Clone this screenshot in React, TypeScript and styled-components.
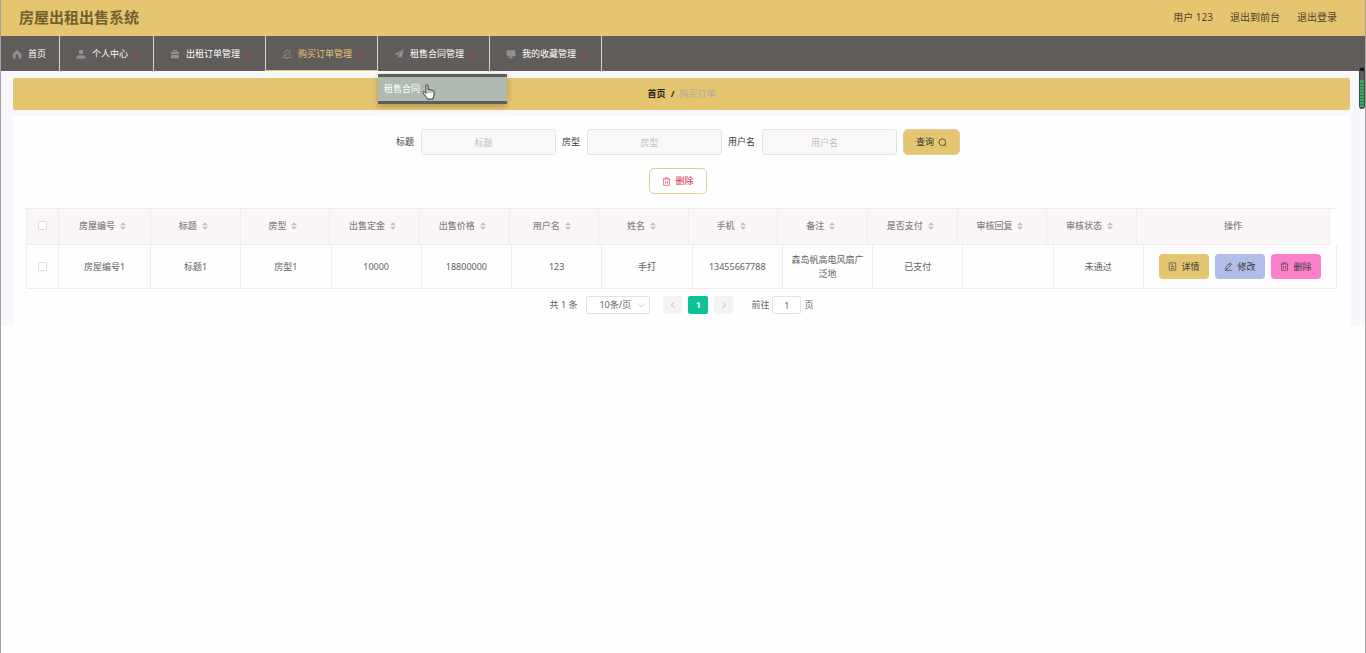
import React from "react";
import styled, { createGlobalStyle, css } from "styled-components";

const gold = "#e6c570";
const slate = "#5f5c5a";
const line = "#eeecf1";

const GlobalStyle = createGlobalStyle`
  * { box-sizing: border-box; }
  body {
    margin: 0;
    background: #fefefe;
    color: #606266;
    font-family: "Noto Sans", "Noto Sans CJK SC", sans-serif;
    font-size: 9px;
    line-height: 14px;
  }
  button, input, select { font: inherit; color: inherit; margin: 0; }
  a { color: inherit; text-decoration: none; }
`;

const Page = styled.div`
  position: relative;
  min-height: 100vh;
  border: solid #a3a3a6;
  border-width: 0 1px;
`;

const Header = styled.header`
  display: flex;
  align-items: center;
  justify-content: space-between;
  height: 36px;
  padding: 0 28px 3px 18px;
  background: ${gold};
`;

const Title = styled.h1`
  margin: 0;
  font-size: 15px;
  line-height: 20px;
  font-weight: 700;
  color: #74602c;
`;

const UserLinks = styled.div`
  display: flex;
  gap: 17px;
  font-size: 10px;
  color: #4f4425;
`;

const Nav = styled.nav`
  display: flex;
  height: 35px;
  background: ${slate};
`;

const NavItem = styled.div<{ $active?: boolean }>`
  position: relative;
  border-right: 1px solid #d6d5d6;
  color: ${(p) => (p.$active ? gold : "#fff")};
  box-shadow: ${(p) => (p.$active ? `inset 0 -1px ${gold}` : "none")};
`;

const NavLink = styled.a<{ $compact?: boolean }>`
  display: flex;
  align-items: center;
  height: 100%;
  padding: ${(p) => (p.$compact ? "0 13px 0 11px" : "0 12px 0 16px")};
  gap: 6px;
  white-space: nowrap;
`;

const NavArrow = styled.svg`
  margin: 0 -1px;
`;

const Submenu = styled.div`
  position: absolute;
  z-index: 2;
  top: 38px;
  left: 0;
  width: 129px;
  border: solid ${slate};
  border-width: 3px 0;
  background: #afbab2;
  box-shadow: 0 2px 6px rgba(0, 0, 0, 0.25);
`;

const SubmenuLink = styled.a`
  display: block;
  padding: 5px 6px;
  color: #fff;
`;

const Pointer = styled.svg`
  position: absolute;
  top: 7px;
  left: 44px;
`;

const Content = styled.main`
  padding: 7px 15px 0 12px;
  background: #f8f8fc;
`;

const Breadcrumb = styled.nav`
  display: flex;
  align-items: center;
  justify-content: center;
  gap: 5px;
  height: 32px;
  margin-bottom: 6px;
  border-radius: 2px;
  background: ${gold};
  color: #a8aba5;
`;

const BreadcrumbHome = styled.a`
  font-weight: 700;
  color: #2c2818;
`;

const BreadcrumbSlash = styled.span`
  font-weight: 700;
  color: #2c2818;
`;

const Panel = styled.section`
  padding: 13px 13px 12px;
  background: #fefefe;
`;

const SearchForm = styled.form`
  display: flex;
  justify-content: center;
  gap: 6px;
  padding-right: 7px;
`;

const Field = styled.label`
  display: flex;
  align-items: center;
  gap: 7px;
  color: #3c3c40;
`;

const TextInput = styled.input`
  width: 135px;
  height: 26px;
  padding: 0 18px 0 8px;
  border: 1px solid #e6e2e8;
  border-radius: 3px;
  background: #fbf8fa;
  text-align: center;
  &::placeholder { color: #bfbcc8; opacity: 1; }
`;

const buttonBase = css`
  display: inline-flex;
  align-items: center;
  justify-content: center;
  gap: 4px;
  padding: 0;
  white-space: nowrap;
`;

const SearchButton = styled.button`
  ${buttonBase}
  width: 57px;
  height: 26px;
  border: 1px solid #e0cf9c;
  border-radius: 5px;
  background: ${gold};
  color: #333;
`;

const Toolbar = styled.div`
  display: flex;
  justify-content: center;
  padding: 13px 7px 14px 0;
`;

const DeleteButton = styled.button`
  ${buttonBase}
  width: 58px;
  height: 26px;
  border: 1px solid #e2cf94;
  border-radius: 5px;
  background: #fff;
  color: #e0283c;
`;

const TableFrame = styled.div`
  border: solid ${line};
  border-width: 1px 0 0 1px;
`;

const Table = styled.table<{ $gutter?: boolean }>`
  width: ${(p) => (p.$gutter ? "calc(100% - 7px)" : "100%")};
  table-layout: fixed;
  border-collapse: separate;
  border-spacing: 0;
  text-align: center;
`;

const CheckCol = styled.col`
  width: 32px;
`;

const DataCol = styled.col<{ $first?: boolean }>`
  width: ${(p) => (p.$first ? "92px" : "auto")};
`;

const ActionCol = styled.col`
  width: 193px;
`;

const HeadCell = styled.th<{ $sortable?: boolean }>`
  height: 36px;
  padding: ${(p) => (p.$sortable ? "0 4px 2px 0" : "0 0 2px")};
  border: solid ${line};
  border-width: 0 1px 1px 0;
  background: #fbf7f9;
  color: #83848b;
  font-weight: 500;
`;

const HeadLabel = styled.span`
  display: inline-flex;
  align-items: center;
  gap: 5px;
`;

const Cell = styled.td`
  height: 44px;
  padding: 0 7px;
  border: solid ${line};
  border-width: 0 1px 1px 0;
  white-space: normal;
`;

const Checkbox = styled.input`
  appearance: none;
  display: block;
  width: 9px;
  height: 9px;
  margin: 0 auto;
  border: 1px solid #dcdde4;
  border-radius: 1px;
  background: #fff;
`;

const Actions = styled.div`
  display: flex;
  justify-content: center;
  gap: 6px;
`;

const ActionButton = styled.button<{ $fill: string }>`
  ${buttonBase}
  width: 50px;
  height: 25px;
  border: 0;
  border-radius: 4px;
  background: ${(p) => p.$fill};
  color: #3d3a3a;
`;

const Pagination = styled.div`
  display: flex;
  align-items: center;
  justify-content: center;
  gap: 6px;
  padding-top: 7px;
`;

const SizePicker = styled.span`
  position: relative;
  margin: 0 7px 0 3px;
`;

const SizeSelect = styled.select`
  appearance: none;
  display: block;
  width: 64px;
  height: 18px;
  padding: 0 12px;
  border: 1px solid #e1e2e9;
  border-radius: 2px;
  background: #fff;
`;

const SizeArrow = styled.svg`
  position: absolute;
  top: 6px;
  right: 5px;
  pointer-events: none;
`;

const PageButton = styled.button<{ $current?: boolean }>`
  ${buttonBase}
  width: ${(p) => (p.$current ? "20px" : "19px")};
  height: 18px;
  border: 0;
  border-radius: 2px;
  background: ${(p) => (p.$current ? "#0dc296" : "#f4f4f6")};
  color: ${(p) => (p.$current ? "#fff" : "#b8bbc3")};
  font-weight: 700;
`;

const Jumper = styled.label`
  display: flex;
  align-items: center;
  gap: 3px;
  margin-left: 12px;
`;

const JumpInput = styled.input`
  width: 29px;
  height: 18px;
  padding: 0;
  border: 1px solid #e1e2e9;
  border-radius: 2px;
  background: #fff;
  text-align: center;
`;

const ScrollMark = styled.svg`
  position: absolute;
  top: 67px;
  right: 0;
`;

const iconPaths: Record<string, React.ReactNode> = {
  home: <path fill="currentColor" d="M8 1.6 1.2 7.6V15h4.6v-4.4a2.2 2.2 0 0 1 4.4 0V15h4.6V7.6z" />,
  user: (
    <g fill="currentColor">
      <circle cx="8" cy="4.8" r="3.6" />
      <path d="M1 15v-2c0-2 1.6-3.2 3.6-3.2h6.8c2 0 3.6 1.2 3.6 3.2v2z" />
    </g>
  ),
  briefcase: (
    <g fill="currentColor">
      <path d="M5 1.5h6v3h3.500V8.500h-13V4.500H5zM6.400 3v1.500h3.200V3z" fillRule="evenodd" />
      <path d="M1.500 9.800h13V15h-13z" />
    </g>
  ),
  bellOff: (
    <g fill="none" stroke="currentColor" strokeWidth="1.3">
      <path d="M3.500 12V7a4.500 4.500 0 0 1 7.500-3.300M12.500 6v6.500M1 13.500h14M6.500 15h3M14.500 1.500 1.500 14.500" />
    </g>
  ),
  plane: <path fill="currentColor" d="M15.500.8.800 8l3.700 1.900L12.400 4 6.300 10.900V15.200l2.400-2.700 3.500 1.800z" />,
  monitor: <path fill="currentColor" d="M1 1.800h14v9.700H9.200v1.700H12v1.600H4v-1.600h2.800v-1.700H1z" />,
  trash: (
    <path fill="none" stroke="currentColor" strokeWidth="1.1" d="M1 3.700h14M5.300 3.500v-2h5.400v2M2.800 4v10.800h10.400V4M6.300 7v5M9.700 7v5" />
  ),
  document: (
    <path fill="none" stroke="currentColor" strokeWidth="1.1" d="M2.200 1.500h11.600v13H2.200zM5 5h4M5 8.200h6M5 11.300h6" />
  ),
  edit: (
    <path fill="none" stroke="currentColor" strokeWidth="1.2" d="m3.500 9.500 6.700-8 3 2.500-6.700 8-3.600 1.200zM8.500 3.500l3 2.500M1.500 14.800h13" />
  ),
  search: (
    <path fill="none" stroke="currentColor" strokeWidth="1.3" d="M7.700 1.500a6 6 0 1 0 0 12 6 6 0 0 0 0-12zM11.800 12l2.700 2.800" />
  ),
};

function Icon({ name, size = 9, color }: { name: string; size?: number; color?: string }) {
  return (
    <svg width={size} height={size} viewBox="0 0 16 16" color={color} aria-hidden="true">
      {iconPaths[name]}
    </svg>
  );
}

function Chevron({ up }: { up?: boolean }) {
  return (
    <NavArrow width="9" height="8" viewBox="0 0 9 8" aria-hidden="true">
      <path d={up ? "M1 5.5 4.5 2.5 8 5.5" : "M1 2.5 4.5 5.5 8 2.5"} fill="none" stroke="#a8464b" strokeWidth="1.2" />
    </NavArrow>
  );
}

function SortCaret() {
  return (
    <svg width="6" height="8" viewBox="0 0 6 8" aria-hidden="true">
      <path d="M0 3.300 3 .2l3 3.100zM0 4.700l3 3.100 3-3.100z" fill="#bdbfc7" />
    </svg>
  );
}

const menu = [
  { label: "首页", icon: "home" },
  { label: "个人中心", icon: "user" },
  { label: "出租订单管理", icon: "briefcase" },
  { label: "购买订单管理", icon: "bellOff", active: true },
  { label: "租售合同管理", icon: "plane", open: ["租售合同"] },
  { label: "我的收藏管理", icon: "monitor" },
];

const columns = ["房屋编号", "标题", "房型", "出售定金", "出售价格", "用户名", "姓名", "手机", "备注", "是否支付", "审核回复", "审核状态"];
const order = ["房屋编号1", "标题1", "房型1", "10000", "18800000", "123", "手打", "13455667788", "森岛帆高电风扇广泛地", "已支付", "", "未通过"];
const filters = ["标题", "房型", "用户名"];

function Columns() {
  return (
    <colgroup>
      <CheckCol />
      {columns.map((c, i) => (
        <DataCol key={c} $first={i === 0} />
      ))}
      <ActionCol />
    </colgroup>
  );
}

export default function App() {
  return (
    <Page lang="zh-CN">
      <GlobalStyle />
      <Header>
        <Title>房屋出租出售系统</Title>
        <UserLinks>
          <span>用户 123</span>
          <a href="#front">退出到前台</a>
          <a href="#logout">退出登录</a>
        </UserLinks>
      </Header>

      <Nav>
        {menu.map((m, i) => (
          <NavItem key={m.label} $active={m.active}>
            <NavLink href="#menu" $compact={i === 0}>
              <Icon name={m.icon} size={10} color="#918f95" />
              {m.label}
              {i > 0 && <Chevron up={!!m.open} />}
            </NavLink>
            {m.open && (
              <Submenu>
                {m.open.map((s) => (
                  <SubmenuLink key={s} href="#contract">{s}</SubmenuLink>
                ))}
                <Pointer width="13" height="16" viewBox="0 0 13 16" aria-hidden="true">
                  <path
                    d="M4 9.500V1.700C4 .3 6 .3 6 1.700V6c.3-1 2-.9 2 .3.4-.9 2-.7 2 .5.500-.7 2-.5 2 .7V11c0 1.500-1 2-1 4H5.200C5 13.200 3 11.800 1 8.800.400 7.700 1.800 7 2.700 8z"
                    fill="#fff"
                    stroke="#222"
                    strokeWidth="0.9"
                  />
                  <path d="M6 6v3M8 6.500V9M10 7v2" stroke="#555" strokeWidth="0.7" />
                </Pointer>
              </Submenu>
            )}
          </NavItem>
        ))}
      </Nav>

      <Content>
        <Breadcrumb aria-label="breadcrumb">
          <BreadcrumbHome href="#home">首页</BreadcrumbHome>
          <BreadcrumbSlash>/</BreadcrumbSlash>
          <span>购买订单</span>
        </Breadcrumb>

        <Panel>
          <SearchForm onSubmit={(e) => e.preventDefault()}>
            {filters.map((f) => (
              <Field key={f}>
                {f}
                <TextInput type="text" placeholder={f} />
              </Field>
            ))}
            <SearchButton type="submit">
              查询
              <Icon name="search" />
            </SearchButton>
          </SearchForm>

          <Toolbar>
            <DeleteButton type="button">
              <Icon name="trash" />
              删除
            </DeleteButton>
          </Toolbar>

          <TableFrame>
            <Table $gutter>
              <Columns />
              <thead>
                <tr>
                  <HeadCell><Checkbox type="checkbox" aria-label="全选" /></HeadCell>
                  {columns.map((c) => (
                    <HeadCell key={c} $sortable>
                      <HeadLabel>{c}<SortCaret /></HeadLabel>
                    </HeadCell>
                  ))}
                  <HeadCell>操作</HeadCell>
                </tr>
              </thead>
            </Table>
            <Table>
              <Columns />
              <tbody>
                <tr>
                  <Cell><Checkbox type="checkbox" aria-label="选择" /></Cell>
                  {order.map((v, i) => (
                    <Cell key={columns[i]}>{v}</Cell>
                  ))}
                  <Cell>
                    <Actions>
                      <ActionButton type="button" $fill={gold}><Icon name="document" />详情</ActionButton>
                      <ActionButton type="button" $fill="#b2beea"><Icon name="edit" />修改</ActionButton>
                      <ActionButton type="button" $fill="#fa80cc"><Icon name="trash" />删除</ActionButton>
                    </Actions>
                  </Cell>
                </tr>
              </tbody>
            </Table>
          </TableFrame>

          <Pagination>
            <span>共 1 条</span>
            <SizePicker>
              <SizeSelect aria-label="每页条数">
                <option>10条/页</option>
              </SizeSelect>
              <SizeArrow width="7" height="7" viewBox="0 0 8 8" aria-hidden="true">
                <path d="m1 2.500 3 3 3-3" fill="none" stroke="#c4c6cf" />
              </SizeArrow>
            </SizePicker>
            <PageButton type="button" aria-label="上一页">
              <svg width="8" height="8" viewBox="0 0 8 8"><path d="M5.500 1 2.500 4l3 3" fill="none" stroke="currentColor" /></svg>
            </PageButton>
            <PageButton type="button" $current>1</PageButton>
            <PageButton type="button" aria-label="下一页">
              <svg width="8" height="8" viewBox="0 0 8 8"><path d="m2.500 1 3 3-3 3" fill="none" stroke="currentColor" /></svg>
            </PageButton>
            <Jumper>
              前往
              <JumpInput type="text" defaultValue="1" />
              页
            </Jumper>
          </Pagination>
        </Panel>
      </Content>

      <ScrollMark width="6" height="42" viewBox="0 0 6 42" aria-hidden="true">
        <rect x="0.500" y="0.500" width="5" height="41" rx="2" fill="#5d5d60" stroke="#44464a" />
        <rect x="1" y="1" width="4" height="3" fill="#17171c" />
        <rect x="1" y="13" width="4" height="27" fill="#3fa565" />
        <path d="M1 16.500h4M1 19.500h4M1 22.500h4M1 25.500h4M1 28.500h4M1 31.500h4M1 34.500h4M1 37.500h4" stroke="#2f7d4c" />
      </ScrollMark>
    </Page>
  );
}
